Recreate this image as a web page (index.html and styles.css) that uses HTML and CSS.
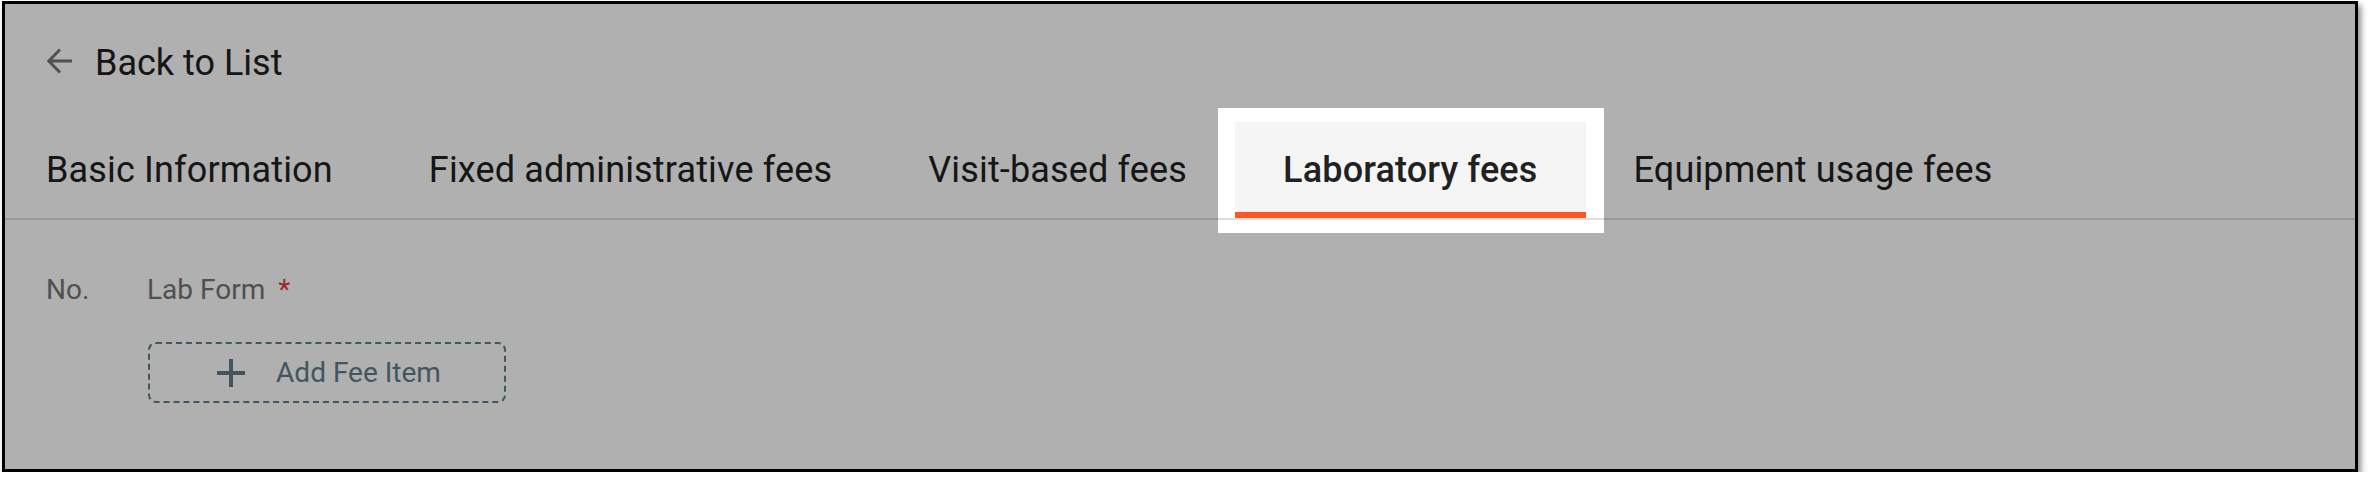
FILE: index.html
```html
<!DOCTYPE html>
<html lang="en">
<head>
  <meta charset="UTF-8" />
  <meta name="viewport" content="width=device-width, initial-scale=1.0" />
  <title>Laboratory fees</title>
  <link rel="stylesheet" href="styles.css">
</head>
<body>
  <div class="frame">
    <div class="back-row">
      <svg class="back-icon" width="26" height="26" viewBox="0 0 26 26" aria-hidden="true">
        <path d="M25 13H2M13 1.5L1.8 13L13 24.5" fill="none" stroke="#757575" stroke-width="3" />
      </svg>
      <span class="back-label">Back to List</span>
    </div>

    <ul class="tabs">
      <li class="tab">Basic Information</li>
      <li class="tab">Fixed administrative fees</li>
      <li class="tab">Visit-based fees</li>
      <li class="tab active">
        Laboratory fees
        <span class="spotlight"></span>
      </li>
      <li class="tab">Equipment usage fees</li>
    </ul>

    <div class="fees">
      <div class="fees-head">
        <span class="col-no">No.</span>
        <span class="col-form">Lab Form <span class="req">*</span></span>
      </div>
      <button class="add-btn" type="button">
        <svg width="28" height="28" viewBox="0 0 28 28" aria-hidden="true">
          <path d="M14 0V28M0 14H28" stroke="#607d8b" stroke-width="4" />
        </svg>
        <span>Add Fee Item</span>
      </button>
    </div>
  </div>
</body>
</html>
```

FILE: styles.css
```css
/* ==========================================================================
   Reset & Global Styles
   ========================================================================== */
*, *::before, *::after {
  margin: 0;
  padding: 0;
  box-sizing: border-box;
}
body {
  font-family: Roboto, 'Liberation Sans', sans-serif;
  background: #fff;
  color: #212121;
}

/* screenshot frame */
.frame {
  position: relative;
  overflow: hidden;
  width: 2356px;
  height: 471px;
  margin: 1px 0 0 2px;
  border: 3px solid #000;
  background: #fff;
  box-shadow: 3px 4px 6px rgba(0, 0, 0, 0.45);
}

/* back link */
.back-row {
  display: flex;
  align-items: flex-start;
  padding: 38px 0 0 40px;
  height: 79px;
}
.back-icon {
  margin: 6px 0 0 2px;
  flex-shrink: 0;
}
.back-label {
  margin-left: 22px;
  font-size: 36px;
  line-height: 42px;
  color: #212121;
}

/* tabs */
.tabs {
  list-style: none;
  display: flex;
  margin-top: 39px;
  padding-left: 41px;
  border-bottom: 2px solid #dedede;
}
.tab {
  position: relative;
  height: 96px;
  display: flex;
  align-items: center;
  padding: 0 48px;
  font-size: 36px;
  line-height: 42px;
  letter-spacing: 0.16px;
  color: #212121;
  white-space: nowrap;
}
.tab:first-child {
  padding-left: 0;
}
.tab.active {
  font-weight: 500;
  background: #f5f5f5;
  box-shadow: inset 0 -6px 0 #ff5722;
}

/* tour highlight around the active tab */
.spotlight {
  position: absolute;
  top: -14px;
  left: -17px;
  right: -18px;
  bottom: -15px;
  pointer-events: none;
  box-shadow: 0 0 0 4000px rgba(0, 0, 0, 0.31);
  z-index: 2;
}

/* fee items */
.fees {
  padding: 53px 0 0 41px;
}
.fees-head {
  display: flex;
  font-size: 28px;
  line-height: 33px;
  color: #757575;
}
.col-no {
  width: 101px;
}
.req {
  margin-left: 6px;
  color: #e53935;
}
.add-btn {
  display: flex;
  align-items: center;
  justify-content: center;
  gap: 31px;
  width: 358px;
  height: 61px;
  margin: 36px 0 0 102px;
  border: 2px dashed #607d8b;
  border-radius: 8px;
  background: transparent;
  font-family: Roboto, 'Liberation Sans', sans-serif;
  font-size: 28px;
  color: #607d8b;
  padding-left: 4px;
}
```
